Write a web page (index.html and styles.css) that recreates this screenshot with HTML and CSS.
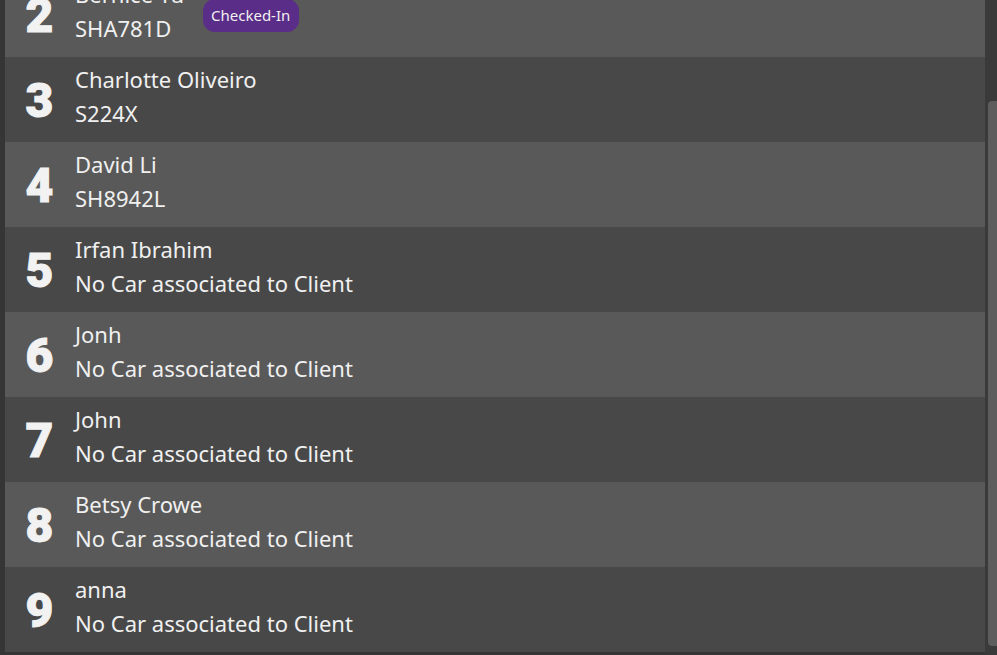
FILE: index.html
```html
<!DOCTYPE html>
<html>
<head>
<meta charset="utf-8">
<link rel="stylesheet" href="styles.css">
</head>
<body>
<div class="app">
  <div class="edge"></div>
  <div class="viewport">
    <div class="list">
      <div class="row light">
        <div class="num">2</div>
        <div class="info fixed"><div class="name">Bernice Yu</div><div class="car">SHA781D</div></div>
        <span class="badge">Checked-In</span>
      </div>
      <div class="row dark">
        <div class="num">3</div>
        <div class="info"><div class="name">Charlotte Oliveiro</div><div class="car">S224X</div></div>
      </div>
      <div class="row light">
        <div class="num">4</div>
        <div class="info"><div class="name">David Li</div><div class="car">SH8942L</div></div>
      </div>
      <div class="row dark">
        <div class="num">5</div>
        <div class="info"><div class="name">Irfan Ibrahim</div><div class="car">No Car associated to Client</div></div>
      </div>
      <div class="row light">
        <div class="num">6</div>
        <div class="info"><div class="name">Jonh</div><div class="car">No Car associated to Client</div></div>
      </div>
      <div class="row dark">
        <div class="num">7</div>
        <div class="info"><div class="name">John</div><div class="car">No Car associated to Client</div></div>
      </div>
      <div class="row light">
        <div class="num">8</div>
        <div class="info"><div class="name">Betsy Crowe</div><div class="car">No Car associated to Client</div></div>
      </div>
      <div class="row dark">
        <div class="num">9</div>
        <div class="info"><div class="name">anna</div><div class="car">No Car associated to Client</div></div>
      </div>
    </div>
  </div>
  <div class="scrollbar"><div class="thumb"></div></div>
</div>
</body>
</html>
```
FILE: styles.css
```css
html, body {
  margin: 0;
  padding: 0;
  background: #363636;
  overflow: hidden;
}
.app {
  display: flex;
  width: 997px;
  height: 655px;
  background: #363636;
  font-family: "Noto Sans", "Open Sans", sans-serif;
  color: #f0f0f0;
}
.edge {
  width: 5px;
  flex: none;
  background: #353535;
}
.viewport {
  width: 980px;
  flex: none;
  height: 652px;
  overflow: hidden;
}
.list {
  margin-top: -28px;
  display: flex;
  flex-direction: column;
}
.row {
  height: 85px;
  display: flex;
  align-items: center;
  box-sizing: border-box;
}
.row.light { background: #595959; }
.row.dark { background: #484848; }
.num {
  width: 70px;
  flex: none;
  text-align: center;
  font-family: "Roboto", "Noto Sans", sans-serif;
  font-weight: 900;
  font-size: 48px;
  line-height: 1;
  color: #f2f2f2;
  -webkit-text-stroke: 1px #f2f2f2;
  margin-top: 2px;
  padding-right: 1px;
  box-sizing: border-box;
}
.info {
  display: flex;
  flex-direction: column;
  font-size: 22px;
  line-height: 34px;
  margin-bottom: 8px;
  white-space: nowrap;
}
.info.fixed {
  width: 128px;
  flex: none;
}
.badge {
  background: #5a2d88;
  color: #f0f0f0;
  font-size: 15px;
  line-height: 21px;
  padding: 6px 9px 6px 8px;
  border-radius: 12px;
  margin-top: 1px;
}
.scrollbar {
  width: 12px;
  flex: none;
  background: #3a3a3a;
  padding-top: 101px;
  box-sizing: border-box;
}
.thumb {
  margin-left: 3px;
  width: 9px;
  height: 545px;
  background: #5d5d5d;
  border-radius: 4px 0 0 4px;
}
```
